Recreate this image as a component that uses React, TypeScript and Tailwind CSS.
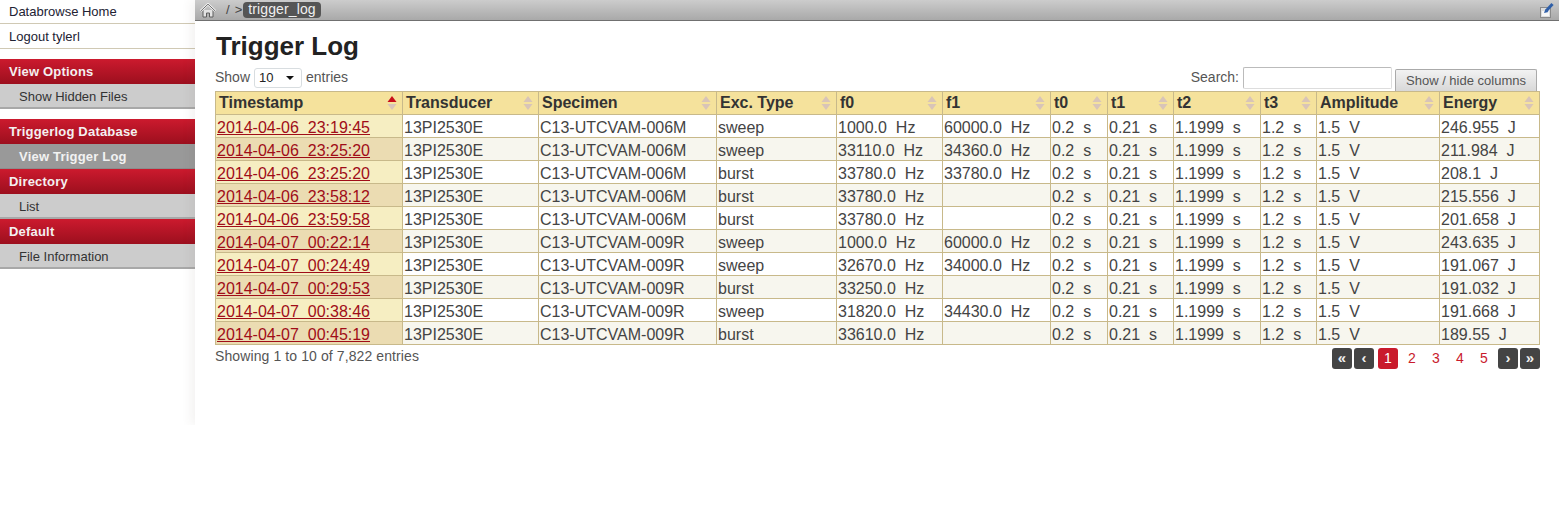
const rows = [
  ['2014-04-06  23:19:45', 'C13-UTCVAM-006M', 'sweep', '1000.0  Hz', '60000.0  Hz', '246.955  J'],
  ['2014-04-06  23:25:20', 'C13-UTCVAM-006M', 'sweep', '33110.0  Hz', '34360.0  Hz', '211.984  J'],
  ['2014-04-06  23:25:20', 'C13-UTCVAM-006M', 'burst', '33780.0  Hz', '33780.0  Hz', '208.1  J'],
  ['2014-04-06  23:58:12', 'C13-UTCVAM-006M', 'burst', '33780.0  Hz', '', '215.556  J'],
  ['2014-04-06  23:59:58', 'C13-UTCVAM-006M', 'burst', '33780.0  Hz', '', '201.658  J'],
  ['2014-04-07  00:22:14', 'C13-UTCVAM-009R', 'sweep', '1000.0  Hz', '60000.0  Hz', '243.635  J'],
  ['2014-04-07  00:24:49', 'C13-UTCVAM-009R', 'sweep', '32670.0  Hz', '34000.0  Hz', '191.067  J'],
  ['2014-04-07  00:29:53', 'C13-UTCVAM-009R', 'burst', '33250.0  Hz', '', '191.032  J'],
  ['2014-04-07  00:38:46', 'C13-UTCVAM-009R', 'sweep', '31820.0  Hz', '34430.0  Hz', '191.668  J'],
  ['2014-04-07  00:45:19', 'C13-UTCVAM-009R', 'burst', '33610.0  Hz', '', '189.55  J'],
]

const columns = [
  ['Timestamp', 187],
  ['Transducer', 136],
  ['Specimen', 178],
  ['Exc. Type', 120],
  ['f0', 106],
  ['f1', 108],
  ['t0', 57],
  ['t1', 66],
  ['t2', 87],
  ['t3', 56],
  ['Amplitude', 123],
  ['Energy', 100],
] as const

const SortIcon = ({ active }: { active?: boolean }) => (
  <svg width="10" height="16" viewBox="0 0 10 16" className="absolute right-[5px] top-[3px]">
    <path d="M5 1 L9.5 7 L0.5 7 Z" fill={active ? '#c80f1a' : '#d8c4b8'} />
    <path d="M0.5 9 L9.5 9 L5 15 Z" fill="#d8c4b8" />
  </svg>
)

const MenuHeader = ({ label }: { label: string }) => (
  <div className="h-[25px] pl-[9px] leading-[25px] text-[13px] tracking-[0.2px] font-bold text-[#f4f0f0] bg-gradient-to-b from-[#cc1a2e] to-[#9c0f1e]">
    {label}
  </div>
)

const MenuItem = ({ label, active }: { label: string; active?: boolean }) => (
  <div
    className={
      active
        ? 'h-[25px] pl-[19px] leading-[25px] text-[13px] tracking-[0.2px] font-bold text-[#f2f2f2] bg-[#999999] border-b border-[#8c8c8c]'
        : 'h-[25px] pl-[19px] leading-[25px] text-[13px] text-[#333333] bg-[#cccccc] border-b-2 border-[#a8a8a8]'
    }
  >
    {label}
  </div>
)

const PageButton = ({ label, dark, current }: { label: string; dark?: boolean; current?: boolean }) => (
  <div
    className={
      dark
        ? 'w-[20px] h-[21px] rounded-[3px] bg-[#444444] text-[#eeeeee] font-bold text-[15px] leading-[19px] text-center'
        : current
          ? 'w-[20px] h-[21px] rounded-[3px] bg-[#c91a2c] text-white text-[14px] leading-[21px] text-center'
          : 'w-[20px] h-[21px] text-[#c91a2c] text-[14px] leading-[21px] text-center'
    }
  >
    {label}
  </div>
)

export default function App() {
  return (
    <div className="relative h-[508px] w-[1559px] overflow-hidden bg-white flex font-['Liberation_Sans',Arial,sans-serif]">
      {/* side menu */}
      <div className="relative w-[195px] shrink-0">
        <div className="h-[24px] pl-[9px] leading-[23px] text-[13px] text-[#222233] border-b border-[#d0c9b4] bg-white">Databrowse Home</div>
        <div className="h-[25px] pl-[9px] leading-[25px] text-[13px] text-[#222233] border-b border-[#d0c9b4] bg-white">Logout tylerl</div>
        <div className="mt-[10px]">
          <MenuHeader label="View Options" />
          <MenuItem label="Show Hidden Files" />
        </div>
        <div className="mt-[10px]">
          <MenuHeader label="Triggerlog Database" />
          <MenuItem label="View Trigger Log" active />
          <MenuHeader label="Directory" />
          <MenuItem label="List" />
          <MenuHeader label="Default" />
          <MenuItem label="File Information" />
        </div>
      </div>

      <div className="flex-1 min-w-0 h-[425px] shadow-[-4px_0_10px_0_rgba(90,70,50,0.07)] [clip-path:inset(0_0_0_-20px)]">
        {/* top bar */}
        <div className="h-[21px] flex items-center bg-gradient-to-b from-[#cccccc] to-[#a9a9a9] border-b border-[#707070] pr-[4px]">
          <svg width="16" height="15" viewBox="0 0 16 15" className="ml-[5px]" fill="none">
            <path d="M3 7 V14 H6.5 V10 H9.5 V14 H13 V7" stroke="#5e5e5e" fill="#e4e4e4" strokeWidth="1" />
            <path d="M0.8 8 L8 1.2 L15.2 8" stroke="#f2f2f2" strokeWidth="2.4" />
            <path d="M0.8 8 L8 1.2 L15.2 8" stroke="#5e5e5e" strokeWidth="0.9" />
          </svg>
          <span className="ml-[10px] text-[13px] text-[#444444]">/</span>
          <span className="ml-[5px] text-[13px] text-[#444444]">&gt;</span>
          <span className="ml-[1px] h-[16px] px-[5px] rounded-[4px] bg-[#555555] text-[#f0f0f0] text-[14px] tracking-[0.12px] leading-[15px]">trigger_log</span>
          <svg width="15" height="16" viewBox="0 0 15 16" className="ml-auto" fill="none">
            <rect x="0.5" y="5.5" width="10" height="10" fill="#dddddd" stroke="#8a8a8a" />
            <rect x="2" y="9" width="7" height="5" fill="#f6f6f6" />
            <path d="M6.5 8.5 L12.5 2" stroke="#2f5fa8" strokeWidth="3" />
            <path d="M4 11 L5.5 7 L8.5 10 Z" fill="#2f5fa8" />
          </svg>
        </div>

        <div className="pl-[20px] pr-[20px]">
          <h1 className="mt-[9px] ml-[1px] h-[32px] text-[26px] leading-[32px] font-bold text-[#222222]">Trigger Log</h1>

          <div className="mt-[5px] h-[24px] flex items-start text-[14px] text-[#555555]">
            <div className="flex items-center h-[21px]">
              <span>Show</span>
              <div className="ml-[4px] w-[48px] h-[20px] rounded-[3px] border border-[#d8dde0] flex items-center pl-[4px] pr-[7px] text-[13px] text-[#222222]">
                <span>10</span>
                <svg width="8" height="4" viewBox="0 0 8 4" className="ml-auto">
                  <path d="M0 0 H8 L4 4 Z" fill="#111111" />
                </svg>
              </div>
              <span className="ml-[4px]">entries</span>
            </div>
            <div className="ml-auto mr-[2px] flex items-start">
              <span className="leading-[21px] mr-[4px]">Search:</span>
              <div className="w-[149px] h-[22px] rounded-[2px] border border-[#bbbbbb] border-b-[#dddddd] border-r-[#dddddd] bg-white" />
              <div className="ml-[3px] mt-[2px] w-[142px] h-[22px] rounded-t-[2px] border border-[#aaaaaa] border-b-0 bg-gradient-to-b from-[#f2f2f2] to-[#d8d8d8] text-[13px] leading-[22px] text-center text-[#555555]">
                Show / hide columns
              </div>
            </div>
          </div>

          <table className="table-fixed border-collapse w-[1324px] text-[16px] text-[#444444]">
            <colgroup>
              {columns.map(([name, w]) => (
                <col key={name} style={{ width: w }} />
              ))}
            </colgroup>
            <thead>
              <tr className="h-[23px] bg-[#f5e29c]">
                {columns.map(([name], i) => (
                  <th key={name} className="relative p-0 pl-[3px] leading-[22px] text-left font-bold text-[#333333] border border-[#c8b98a] whitespace-pre overflow-hidden">
                    {name}
                    <SortIcon active={i === 0} />
                  </th>
                ))}
              </tr>
            </thead>
            <tbody>
              {rows.map((r, i) => {
                const even = i % 2 === 1
                const cell = 'p-0 pl-[1px] pt-[4px] leading-[18px] border border-[#c8b98a] whitespace-pre overflow-hidden'
                const cells = ['13PI2530E', r[1], r[2], r[3], r[4], '0.2  s', '0.21  s', '1.1999  s', '1.2  s', '1.5  V', r[5]]
                return (
                  <tr key={i} className={even ? 'h-[23px] bg-[#f7f6ee]' : 'h-[23px] bg-white'}>
                    <td className={`${cell} ${even ? 'bg-[#ebdcb2]' : 'bg-[#f6eec2]'}`}>
                      <a href="#" className="text-[#a00d18] underline">{r[0]}</a>
                    </td>
                    {cells.map((c, j) => (
                      <td key={j} className={cell}>{c}</td>
                    ))}
                  </tr>
                )
              })}
            </tbody>
          </table>

          <div className="mt-[3px] flex items-start">
            <span className="text-[14px] tracking-[0.1px] leading-[16px] text-[#555555]">Showing 1 to 10 of 7,822 entries</span>
            <div className="ml-auto flex gap-[2px] -mr-px">
              <PageButton label="«" dark />
              <PageButton label="‹" dark />
              <div className="ml-[2px] flex gap-[4px]">
                <PageButton label="1" current />
                <PageButton label="2" />
                <PageButton label="3" />
                <PageButton label="4" />
                <PageButton label="5" />
              </div>
              <div className="ml-[2px]"><PageButton label="›" dark /></div>
              <PageButton label="»" dark />
            </div>
          </div>
        </div>
      </div>
    </div>
  )
}
